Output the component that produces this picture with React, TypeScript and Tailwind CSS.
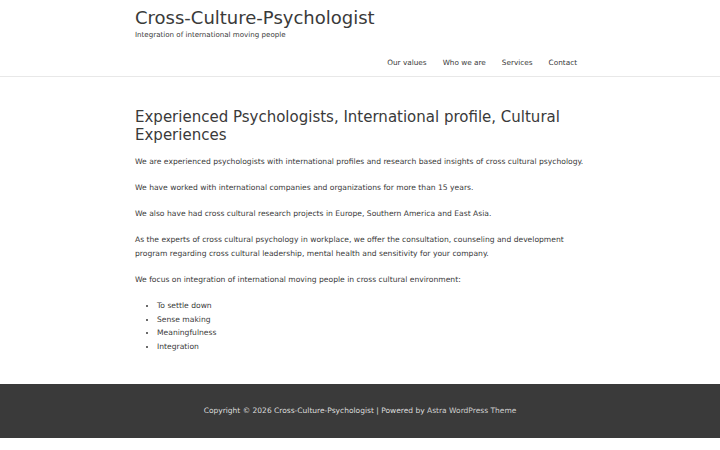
export default function App() {
  const font = { fontFamily: '"DejaVu Sans", sans-serif' };
  return (
    <div className="min-h-[450px] bg-white text-[#3a3a3a]" style={font}>
      <header className="border-b border-[#e8e8e8]">
        <div className="mx-auto w-[450px] pt-[7px] pb-[7px]">
          <div className="text-[18px] leading-[22px] text-[#3a3a3a]">Cross-Culture-Psychologist</div>
          <div className="text-[7.1px] leading-[9px] mt-[1px]">Integration of international moving people</div>
          <nav className="flex justify-end gap-[16px] pr-[8px] mt-[18px] text-[7.3px] leading-[12px]">
            <span>Our values</span>
            <span>Who we are</span>
            <span>Services</span>
            <span>Contact</span>
          </nav>
        </div>
      </header>
      <main className="mx-auto w-[450px] pt-[31px] pb-[30px]">
        <h1 className="text-[15px] leading-[18px] text-[#3a3a3a] mb-[11px]">
          Experienced Psychologists, International profile, Cultural Experiences
        </h1>
        <div className="text-[7.6px] leading-[14px] flex flex-col gap-[12px]">
          <p>We are experienced psychologists with international profiles and research based insights of cross cultural psychology.</p>
          <p>We have worked with international companies and organizations for more than 15 years.</p>
          <p>We also have had cross cultural research projects in Europe, Southern America and East Asia.</p>
          <p>As the experts of cross cultural psychology in workplace, we offer the consultation, counseling and development program regarding cross cultural leadership, mental health and sensitivity for your company.</p>
          <p>We focus on integration of international moving people in cross cultural environment:</p>
          <ul className="list-disc pl-[22px] leading-[13.7px]">
            <li>To settle down</li>
            <li>Sense making</li>
            <li>Meaningfulness</li>
            <li>Integration</li>
          </ul>
        </div>
      </main>
      <footer className="bg-[#3a3a3a] h-[54px] flex items-center justify-center text-[7.5px] text-[#dddddd]">
        <span>Copyright © 2026 Cross-Culture-Psychologist | Powered by <span className="text-[#d0d0d0]">Astra WordPress Theme</span></span>
      </footer>
    </div>
  );
}
